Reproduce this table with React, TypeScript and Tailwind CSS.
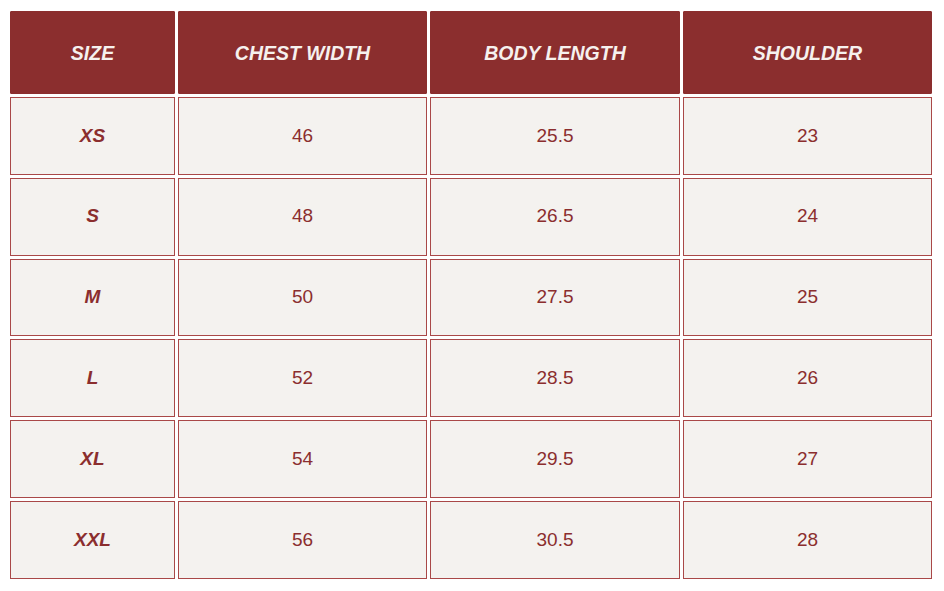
import React from "react";

const rows = [
  ["XS", "46", "25.5", "23"],
  ["S", "48", "26.5", "24"],
  ["M", "50", "27.5", "25"],
  ["L", "52", "28.5", "26"],
  ["XL", "54", "29.5", "27"],
  ["XXL", "56", "30.5", "28"],
];

const headers = ["SIZE", "CHEST WIDTH", "BODY LENGTH", "SHOULDER"];

export default function App() {
  return (
    <div
      className="w-[944px] h-[591px] bg-white pl-[10px] pt-[11px]"
      style={{ fontFamily: '"Liberation Sans", Arial, sans-serif' }}
    >
      <div className="grid grid-cols-[165px_249px_250px_249px] grid-rows-[83px_repeat(6,77.8px)] gap-[3px]">
        {headers.map((h) => (
          <div
            key={h}
            className="flex items-center justify-center pt-[2px] bg-[#8b2e2e] border border-[#8b2e2e] rounded-[1px] text-[#f6f1ee] text-[19.5px] font-bold italic"
          >
            {h}
          </div>
        ))}
        {rows.map((r) =>
          r.map((c, i) => (
            <div
              key={r[0] + i}
              className={
                "flex items-center justify-center bg-[#f4f2ef] border border-[#a94848] text-[#8b2e2e] text-[19px] " +
                (i === 0 ? "font-bold italic" : "")
              }
            >
              {c}
            </div>
          ))
        )}
      </div>
    </div>
  );
}
